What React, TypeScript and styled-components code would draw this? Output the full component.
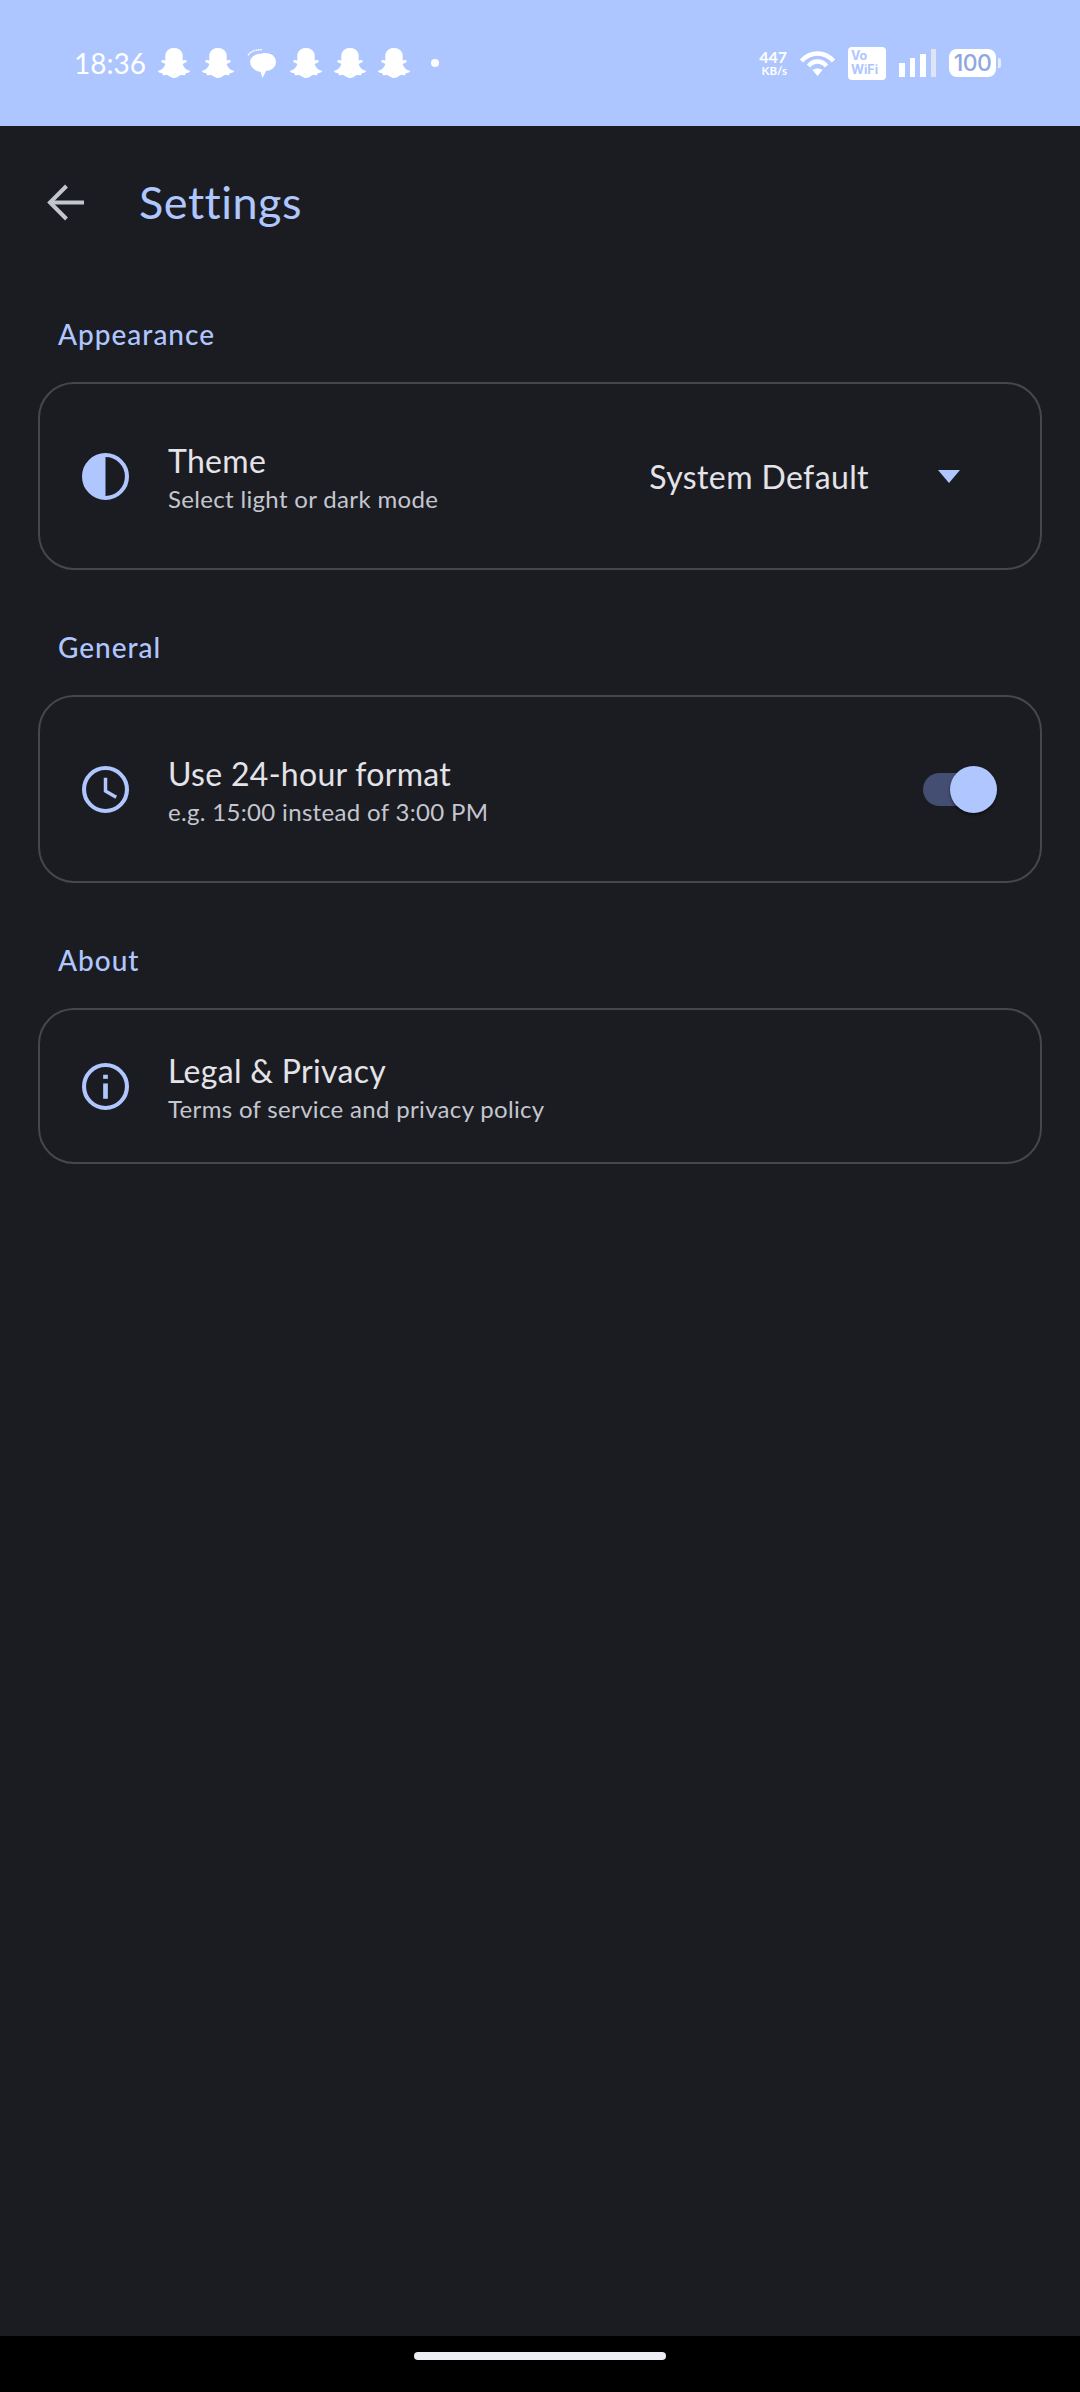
import React from "react";
import styled, { createGlobalStyle } from "styled-components";
import { FaSnapchatGhost } from "react-icons/fa";

const accent = "#afc6ff";
const fontStack = `"Lato", "Noto Sans", sans-serif`;

const GlobalStyle = createGlobalStyle`
  html, body {
    margin: 0;
    padding: 0;
    background: #1b1c21;
  }
  * {
    box-sizing: border-box;
  }
`;

const Page = styled.div`
  display: flex;
  flex-direction: column;
  width: 1080px;
  height: 2392px;
  overflow: hidden;
  background: #1b1c21;
  font-family: ${fontStack};
`;

const StatusBar = styled.div`
  display: flex;
  flex: none;
  align-items: center;
  justify-content: space-between;
  height: 126px;
  padding: 0 79px 0 74px;
  background: #aec6ff;
  color: #fff;
`;

const StatusGroup = styled.div`
  display: flex;
  align-items: center;
`;

const Clock = styled.span`
  width: 78px;
  font-size: 28px;
  line-height: 34px;
`;

const NotifySlot = styled.span`
  display: flex;
  align-items: center;
  justify-content: center;
  width: 44px;
  height: 32px;
  font-size: 32px;
`;

const NotifyDot = styled.span`
  width: 8px;
  height: 8px;
  margin-left: 15px;
  border-radius: 50%;
  background: #fff;
`;

const Speed = styled.div`
  display: flex;
  flex-direction: column;
  align-items: flex-end;
  margin-right: 12px;
  font-weight: 700;
`;

const SpeedValue = styled.span`
  font-size: 16px;
  line-height: 15px;
`;

const SpeedUnit = styled.span`
  font-size: 11.5px;
  line-height: 13px;
`;

const VoWifi = styled.span`
  display: flex;
  flex-direction: column;
  justify-content: center;
  width: 38px;
  height: 33px;
  margin: 0 13px 0 12px;
  padding-left: 3px;
  border-radius: 4px;
  background: #fff;
  color: #aec6ff;
  font-family: "Inter", sans-serif;
  font-size: 12.5px;
  font-weight: 700;
  line-height: 14px;
`;

const SignalBars = styled.div`
  display: flex;
  align-items: flex-end;
  gap: 5px;
  height: 28px;
  margin-right: 13px;
`;

const SignalBar = styled.span<{ $height: number; $dim?: boolean }>`
  width: 5.5px;
  height: ${(p) => p.$height}px;
  background: ${(p) => (p.$dim ? "#dfe4f2" : "#fff")};
`;

const Battery = styled.div`
  display: flex;
  align-items: center;
  gap: 2px;
`;

const BatteryBody = styled.span`
  display: flex;
  align-items: center;
  justify-content: center;
  width: 47px;
  height: 28px;
  border-radius: 8px;
  background: #fff;
  color: #8fa8e0;
  font-family: "Inter", sans-serif;
  font-size: 23px;
  font-weight: 500;
  letter-spacing: -0.5px;
`;

const BatteryTip = styled.span`
  width: 3px;
  height: 10px;
  border-radius: 0 2px 2px 0;
  background: #e6ecfb;
`;

const Main = styled.main`
  display: flex;
  flex: 1;
  flex-direction: column;
  padding: 0 38px;
`;

const Header = styled.header`
  display: flex;
  align-items: center;
  gap: 55px;
  height: 152px;
  margin: 0 0 36px 9px;
`;

const BackButton = styled.span`
  display: flex;
  width: 37px;
  height: 37px;
`;

const Title = styled.h1`
  margin: 0;
  color: ${accent};
  font-size: 45px;
  font-weight: 400;
  letter-spacing: 0.5px;
  line-height: 52px;
`;

const Section = styled.section`
  display: flex;
  flex-direction: column;
  gap: 28px;
  margin-bottom: 57px;
`;

const SectionLabel = styled.h2`
  margin: 0 0 0 20px;
  color: ${accent};
  font-size: 28px;
  font-weight: 500;
  letter-spacing: 1px;
  line-height: 40px;
`;

const Card = styled.div<{ $height: number }>`
  display: flex;
  align-items: center;
  height: ${(p) => p.$height}px;
  padding: 0 44px 0 42px;
  border: 2px solid #46474d;
  border-radius: 36px;
`;

const RowIcon = styled.span`
  display: flex;
  flex: none;
  width: 47px;
  height: 47px;
  margin-right: 39px;
`;

const RowText = styled.div`
  display: flex;
  flex: 1;
  flex-direction: column;
  gap: 3px;
  padding-top: 3px;
`;

const RowTitle = styled.span`
  color: #e3e3e9;
  font-size: 32px;
  letter-spacing: 0.3px;
  line-height: 40px;
`;

const RowSubtitle = styled.span`
  color: #c4c6d0;
  font-size: 24px;
  letter-spacing: 0.33px;
  line-height: 30px;
`;

const SelectValue = styled.span`
  margin-right: 69px;
  color: #e3e3e9;
  font-size: 32px;
  letter-spacing: 0.4px;
`;

const Caret = styled.span`
  width: 0;
  height: 0;
  margin-right: 36px;
  border-top: 13px solid ${accent};
  border-right: 11px solid transparent;
  border-left: 11px solid transparent;
`;

const Toggle = styled.div`
  position: relative;
  width: 74px;
  height: 33px;
  margin-right: -1px;
  border-radius: 17px;
  background: #444e72;
`;

const ToggleKnob = styled.span`
  position: absolute;
  top: -7px;
  right: 0;
  width: 47px;
  height: 47px;
  border-radius: 50%;
  background: ${accent};
  box-shadow: 0 2px 3px rgba(0, 0, 0, 0.5);
`;

const NavBar = styled.div`
  display: flex;
  flex: none;
  justify-content: center;
  height: 56px;
  padding-top: 16px;
  background: #000;
`;

const NavHandle = styled.span`
  width: 252px;
  height: 8px;
  border-radius: 4px;
  background: #eceef3;
`;

const ChatBubble = () => (
  <svg width="30" height="30" viewBox="0 0 29 29">
    <path d="M1 7 C4 2.5 10 1.5 15 1.6" fill="none" stroke="#fff" strokeWidth="1.4" strokeDasharray="1.6 0.6" />
    <path d="M15 5 C23 4 28 8 28 13.5 C28 19 23 22 18.5 22 L15 29 L13 23 C7 22 3 18 3 13.5 C3 8 8 5 15 5 Z" fill="#fff" />
    <path d="M3 10 C6 6 10 4.5 15 4.5" fill="none" stroke="#aec6ff" strokeWidth="1.2" />
  </svg>
);

const WifiIcon = () => (
  <svg width="37" height="26" viewBox="0 0 36 26">
    <path d="M2 11 C11 1 25 1 34 11" fill="none" stroke="#fff" strokeWidth="4.5" />
    <path d="M9 16 C14 10 22 10 27 16" fill="none" stroke="#fff" strokeWidth="4.5" />
    <path d="M13 20 C16 18 20 18 23 20 L18 26 Z" fill="#fff" />
  </svg>
);

const BackIcon = () => (
  <svg width="37" height="37" viewBox="0 0 37 37" fill="none" stroke="#c4c6cf" strokeWidth="4">
    <path d="M37 18.5 H3" />
    <path d="M19.5 2 L3 18.5 L19.5 35" />
  </svg>
);

const ContrastIcon = () => (
  <svg width="47" height="47" viewBox="0 0 46 46">
    <circle cx="23" cy="23" r="21" fill="none" stroke={accent} strokeWidth="4" />
    <path d="M23 1 A22 22 0 0 0 23 45 Z" fill={accent} />
  </svg>
);

const ClockIcon = () => (
  <svg width="47" height="47" viewBox="0 0 46 46" fill="none" stroke={accent}>
    <circle cx="23" cy="23" r="21" strokeWidth="4" />
    <path d="M23 11.5 V24.5 L33.5 30.5" strokeWidth="3.4" />
  </svg>
);

const InfoIcon = () => (
  <svg width="47" height="47" viewBox="0 0 46 46" fill="none" stroke={accent}>
    <circle cx="23" cy="23" r="21" strokeWidth="4" />
    <path d="M23 20 V35" strokeWidth="4.6" />
    <path d="M23 11.5 V15.5" strokeWidth="4.6" />
  </svg>
);

export default function App() {
  return (
    <Page>
      <GlobalStyle />
      <StatusBar>
        <StatusGroup>
          <Clock>18:36</Clock>
          <NotifySlot><FaSnapchatGhost /></NotifySlot>
          <NotifySlot><FaSnapchatGhost /></NotifySlot>
          <NotifySlot><ChatBubble /></NotifySlot>
          <NotifySlot><FaSnapchatGhost /></NotifySlot>
          <NotifySlot><FaSnapchatGhost /></NotifySlot>
          <NotifySlot><FaSnapchatGhost /></NotifySlot>
          <NotifyDot />
        </StatusGroup>
        <StatusGroup>
          <Speed>
            <SpeedValue>447</SpeedValue>
            <SpeedUnit>KB/s</SpeedUnit>
          </Speed>
          <WifiIcon />
          <VoWifi>
            <span>Vo</span>
            <span>WiFi</span>
          </VoWifi>
          <SignalBars>
            <SignalBar $height={14} />
            <SignalBar $height={19} />
            <SignalBar $height={23} />
            <SignalBar $height={28} $dim />
          </SignalBars>
          <Battery>
            <BatteryBody>100</BatteryBody>
            <BatteryTip />
          </Battery>
        </StatusGroup>
      </StatusBar>
      <Main>
        <Header>
          <BackButton><BackIcon /></BackButton>
          <Title>Settings</Title>
        </Header>
        <Section>
          <SectionLabel>Appearance</SectionLabel>
          <Card $height={188}>
            <RowIcon><ContrastIcon /></RowIcon>
            <RowText>
              <RowTitle>Theme</RowTitle>
              <RowSubtitle>Select light or dark mode</RowSubtitle>
            </RowText>
            <SelectValue>System Default</SelectValue>
            <Caret />
          </Card>
        </Section>
        <Section>
          <SectionLabel>General</SectionLabel>
          <Card $height={188}>
            <RowIcon><ClockIcon /></RowIcon>
            <RowText>
              <RowTitle>Use 24-hour format</RowTitle>
              <RowSubtitle>e.g. 15:00 instead of 3:00 PM</RowSubtitle>
            </RowText>
            <Toggle>
              <ToggleKnob />
            </Toggle>
          </Card>
        </Section>
        <Section>
          <SectionLabel>About</SectionLabel>
          <Card $height={156}>
            <RowIcon><InfoIcon /></RowIcon>
            <RowText>
              <RowTitle>Legal &amp; Privacy</RowTitle>
              <RowSubtitle>Terms of service and privacy policy</RowSubtitle>
            </RowText>
          </Card>
        </Section>
      </Main>
      <NavBar>
        <NavHandle />
      </NavBar>
    </Page>
  );
}
